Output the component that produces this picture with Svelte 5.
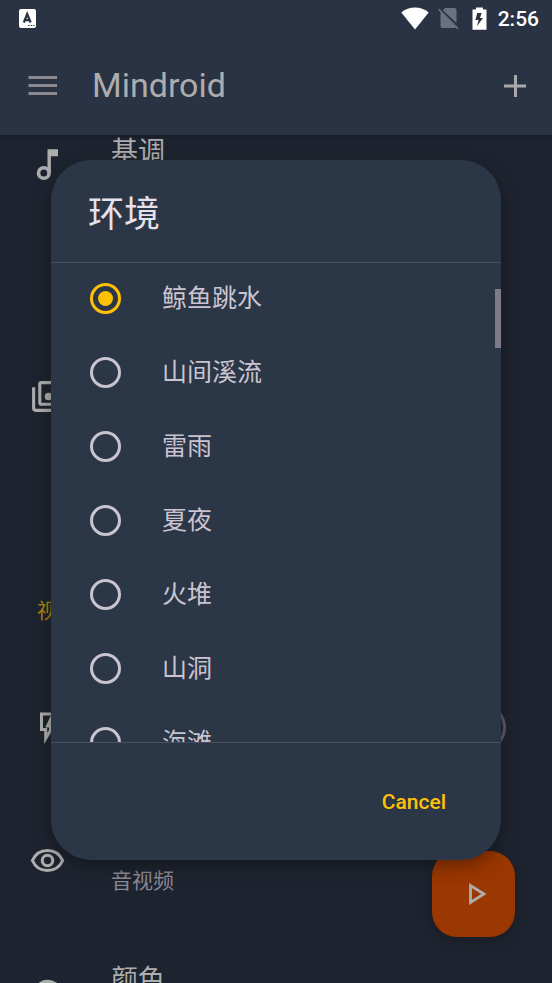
<script>
	let options = ["鲸鱼跳水", "山间溪流", "雷雨", "夏夜", "火堆", "山洞", "海滩"];
	let selected = "鲸鱼跳水";
	let flash = false;
	let open = true;
</script>

<div class="screen">
	<header>
		<div class="status">
			<svg class="badge" width="17" height="19" viewBox="0 0 17 19">
				<rect width="17" height="19" rx="2" fill="#fff" />
				<path d="M4.800 13.500 L8.200 5 L11.600 13.500 M6 11.200 H10.400" fill="none" stroke="#2a3344" stroke-width="2.2" />
				<path d="M9 16.500h1.500M11.700 16.500h1.500M14.200 16.500h1.300" stroke="#2a3344" stroke-width="1.2" />
			</svg>
			<svg width="28" height="23" viewBox="0 0 28 23">
				<path d="M0.3 5.6 C8 -1.2 20 -1.2 27.7 5.6 L14 22.5 Z" fill="#fff" />
			</svg>
			<svg class="sim" width="21" height="23" viewBox="0 0 21 23">
				<path d="M7 1 H16.5 Q18.5 1 18.5 3 V16 L4.8 3.2 Z M2.5 5.3 L18 20.2 Q17.5 21 16.5 21 H4.5 Q2.5 21 2.5 19 Z" fill="#6b727f" />
				<path d="M0.8 2.4 L20 21.8" stroke="#6b727f" stroke-width="1.7" />
			</svg>
			<svg class="battery" width="15" height="23" viewBox="0 0 15 23">
				<path d="M4 0.4 H11 V2.5 H14.5 V22.7 H0.5 V2.5 H4 Z" fill="#fff" />
				<path d="M9.6 6 H5.2 L3.4 13 H6.6 L4.9 19.2 L11 11 H8 Z" fill="#2a3344" />
			</svg>
			<span class="time">2:56</span>
		</div>
		<div class="toolbar">
			<button class="icon" aria-label="Menu">
				<svg width="30" height="22" viewBox="0 0 30 22">
					<path d="M0.500 2.500h28.500M0.500 10.500h28.500M0.500 18.500h28.500" stroke="#8e8991" stroke-width="3" />
				</svg>
			</button>
			<h1>Mindroid</h1>
			<button class="icon" aria-label="Add">
				<svg width="22" height="22" viewBox="0 0 22 22">
					<path d="M0 11h22M11.500 0v22" stroke="#a9a9a9" stroke-width="3" />
				</svg>
			</button>
		</div>
	</header>

	<main>
		<div class="settings">
			<div class="row">
				<svg width="37" height="37" viewBox="0 0 37 37" fill="#adadad">
					<circle cx="14.800" cy="26" r="5.300" fill="none" stroke="#adadad" stroke-width="3.600" />
					<path d="M18.500 2.200H29V9.200H21.900V26H18.500z" />
				</svg>
				<div class="text"><span class="name">基调</span><span class="detail"></span></div>
			</div>
			<div class="slot"></div>
			<div class="row">
				<svg width="37" height="37" viewBox="0 0 24 24" fill="none" stroke="#adadad" stroke-width="2">
					<path d="M3 6v13.500Q3 21 4.500 21H18" />
					<rect x="7" y="3" width="14" height="14" rx="1" />
					<circle cx="12.700" cy="12" r="2.500" fill="#adadad" stroke="none" />
				</svg>
			</div>
			<div class="slot"></div>
			<h2>视觉</h2>
			<div class="row">
				<svg width="37" height="37" viewBox="0 0 37 37" fill="none">
					<path d="M26 5H12.500V20.500H16.700V29.500L25 15.500" stroke="#adadad" stroke-width="3" />
					<path d="M21.500 7L16.300 18.500H20V23L26 13V7z" fill="#adadad" />
				</svg>
				<input class="switch" type="checkbox" aria-label="视觉" bind:checked={flash} />
			</div>
			<div class="row">
				<svg width="37" height="37" viewBox="0 0 24 24" fill="none" stroke="#adadad" stroke-width="2">
					<path d="M2.200 12C4 7.900 7.700 5.500 12 5.500S20 7.900 21.800 12C20 16.100 16.300 18.500 12 18.500S4 16.100 2.200 12z" />
					<circle cx="12" cy="12" r="3.400" />
				</svg>
				<div class="text"><span class="name"></span><span class="detail">音视频</span></div>
			</div>
			<div class="row">
				<svg width="37" height="37" viewBox="0 0 24 24" fill="#adadad">
					<path d="M12 3a9 9 0 0 0 0 18c.8 0 1.500-.7 1.500-1.500 0-1-.8-1.300-.8-2 0-.8.700-1.500 1.500-1.500H16a5 5 0 0 0 5-5c0-4.400-4-8-9-8z" />
				</svg>
				<div class="text"><span class="name">颜色</span><span class="detail"></span></div>
			</div>
		</div>
	</main>

	<button class="fab" aria-label="Play">
		<svg width="18" height="22" viewBox="0 0 18 22">
			<path d="M1.500 2.600v16.800L14.900 11z" fill="none" stroke="#adadad" stroke-width="2.800" />
		</svg>
	</button>

	{#if open}
		<div class="scrim">
			<div class="dialog" role="dialog" aria-modal="true" aria-labelledby="dialog-title">
				<h2 id="dialog-title">环境</h2>
				<div class="list">
					{#each options as option}
						<label>
							<input type="radio" name="environment" value={option} bind:group={selected} />
							<span>{option}</span>
						</label>
					{/each}
				</div>
				<div class="thumb"></div>
				<div class="actions">
					<button on:click={() => (open = false)}>Cancel</button>
				</div>
			</div>
		</div>
	{/if}
</div>

<style>
	:global(body) {
		background: #1e242f;
	}
	.screen {
		position: relative;
		display: flex;
		flex-direction: column;
		height: 100vh;
		overflow: hidden;
		background: #1e242f;
		color: #adadad;
		font-family: Roboto, "Noto Sans CJK SC", sans-serif;
	}
	h1, h2 {
		margin: 0;
		font-weight: 400;
	}
	button {
		padding: 0;
		border: none;
		background: none;
		font-family: inherit;
		cursor: pointer;
	}
	svg {
		display: block;
		flex: none;
	}
	header {
		position: relative;
		z-index: 1;
		background: #2a3344;
		box-shadow: 0 1px 4px rgba(0, 0, 0, 0.35);
	}
	.status {
		display: flex;
		align-items: center;
		height: 37px;
		padding: 0 13px 0 19px;
	}
	.badge {
		margin-right: auto;
	}
	.sim {
		margin-left: 9px;
	}
	.battery {
		margin: 0 11px 0 13px;
	}
	.time {
		padding-top: 2px;
		color: #fff;
		font-size: 21px;
		font-weight: 500;
		line-height: 35px;
	}
	.toolbar {
		display: flex;
		align-items: center;
		height: 98px;
		padding: 0 26px 0 28px;
	}
	h1 {
		flex: 1;
		margin-left: 34px;
		padding-bottom: 2px;
		font-size: 34px;
		line-height: 40px;
	}
	main {
		flex: 1;
		min-height: 0;
		overflow: hidden;
	}
	.settings {
		margin-top: -36px;
	}
	.row {
		display: flex;
		align-items: center;
		height: 133px;
		padding: 0 46px 0 29px;
	}
	.text {
		display: flex;
		flex-direction: column;
		margin-left: 45px;
		padding-top: 4px;
	}
	.name {
		height: 36px;
		font-size: 27px;
		line-height: 36px;
	}
	.detail {
		height: 32px;
		color: #8c8790;
		font-size: 21px;
		line-height: 32px;
	}
	.slot {
		height: 98px;
	}
	.settings h2 {
		padding-left: 37px;
		color: #ac8310;
		font-size: 21px;
		line-height: 100px;
	}
	.switch {
		appearance: none;
		width: 80px;
		height: 49px;
		margin: 0 0 0 auto;
		border: 3px solid #5f5b65;
		border-radius: 25px;
	}
	.fab {
		position: absolute;
		right: 37px;
		bottom: 46px;
		display: flex;
		align-items: center;
		justify-content: center;
		width: 83px;
		height: 86px;
		padding-left: 8px;
		border-radius: 25px;
		background: #9b3700;
		box-shadow: 0 4px 12px rgba(0, 0, 0, 0.25);
	}
	.scrim {
		position: absolute;
		inset: 0;
		z-index: 2;
		display: flex;
		align-items: center;
		padding: 37px 51px 0;
	}
	.dialog {
		position: relative;
		display: flex;
		flex-direction: column;
		width: 100%;
		max-height: calc(100vh - 283px);
		overflow: hidden;
		border-radius: 40px;
		background: #2b3646;
		box-shadow: 0 6px 18px rgba(0, 0, 0, 0.35);
	}
	.dialog h2 {
		flex: none;
		margin-bottom: -2px;
		padding: 28px 37px 20px;
		border-bottom: 1px solid #475060;
		color: #e6e1ea;
		font-size: 36px;
		line-height: 54px;
	}
	.list {
		flex: 1;
		min-height: 0;
		overflow-y: auto;
		scrollbar-width: none;
	}
	.list label {
		display: flex;
		align-items: center;
		gap: 41px;
		height: 74px;
		padding: 0 39px;
		color: #cac4d0;
		font-size: 25px;
		line-height: 36px;
		cursor: pointer;
	}
	.list span {
		padding-top: 2px;
	}
	.list input {
		appearance: none;
		display: grid;
		place-items: center;
		flex: none;
		width: 31px;
		height: 31px;
		margin: 0;
		border: 3px solid #cac4d0;
		border-radius: 50%;
	}
	.list input:checked {
		border-color: #ffc107;
	}
	.list input:checked::before {
		content: "";
		width: 15px;
		height: 15px;
		border-radius: 50%;
		background: #ffc107;
	}
	.thumb {
		position: absolute;
		top: 129px;
		right: 0;
		width: 6px;
		height: 59px;
		background: #7b7b8a;
	}
	.actions {
		display: flex;
		flex: none;
		align-items: center;
		justify-content: flex-end;
		height: 117px;
		margin-top: -1px;
		padding-right: 55px;
		border-top: 1px solid #475060;
	}
	.actions button {
		color: #ffc107;
		font-size: 21px;
		font-weight: 500;
		line-height: 48px;
	}
</style>
